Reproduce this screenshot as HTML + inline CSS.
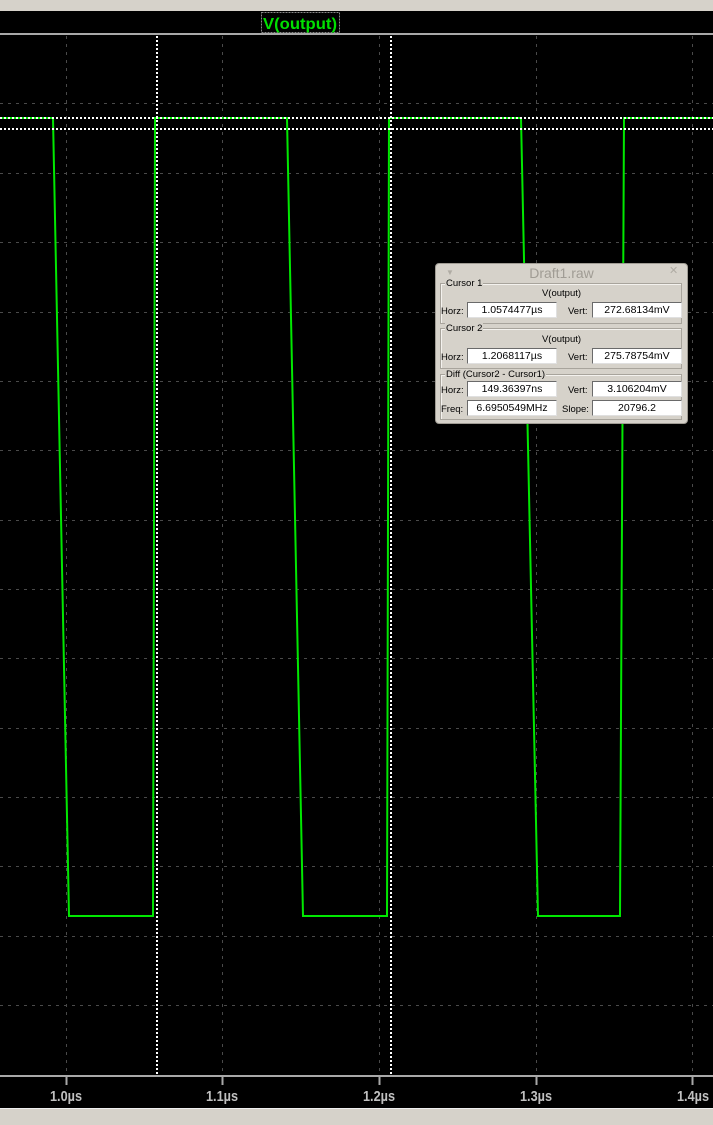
<!DOCTYPE html>
<html><head><meta charset="utf-8"><style>
html,body{margin:0;padding:0;width:713px;height:1124px;overflow:hidden;background:#000;font-family:"Liberation Sans",sans-serif}
.box{position:absolute;left:435px;top:263px;width:251px;height:159px;background:#d6d2ca;border:1px solid #a09c94;border-radius:4px;color:#000}
.a{position:absolute;font-size:9.5px;line-height:11px;white-space:nowrap}
.g{position:absolute;border:1px solid #a8a49c;box-shadow:1px 1px 0 #f4f2ee inset}
.lg{position:absolute;background:#d6d2ca;padding:0 1px;font-size:9.5px;line-height:11px}
.f{position:absolute;background:#fff;border:1px solid #6a6a6a;border-right-color:#e0e0e0;border-bottom-color:#e0e0e0;height:14px;line-height:14px;text-align:center;font-size:10.5px;width:88px}
</style></head><body>
<div style="position:absolute;left:0;top:0;width:713px;height:11px;background:#d6d2ca"></div>
<div style="position:absolute;left:0;top:1108px;width:713px;height:16px;background:#d6d2ca;border-top:1px solid #eee"></div>
<svg width="713" height="1124" style="position:absolute;left:0;top:0">
<line x1="0" y1="34" x2="713" y2="34" stroke="#a8a8a8" stroke-width="2"/>
<rect x="261.5" y="12.5" width="78" height="20" fill="none" stroke="#888" stroke-dasharray="2,1"/>
<text x="300" y="29" text-anchor="middle" fill="#00e000" font-family="Liberation Sans" font-weight="bold" font-size="16" textLength="74" lengthAdjust="spacingAndGlyphs">V(output)</text>
<g stroke="#4a4a4a" stroke-width="1" stroke-dasharray="3,5">
<line x1="66.5" y1="36" x2="66.5" y2="1075"/><line x1="222.5" y1="36" x2="222.5" y2="1075"/><line x1="379.5" y1="36" x2="379.5" y2="1075"/><line x1="536.5" y1="36" x2="536.5" y2="1075"/><line x1="692.5" y1="36" x2="692.5" y2="1075"/>
<line x1="0" y1="103.5" x2="713" y2="103.5"/><line x1="0" y1="173.5" x2="713" y2="173.5"/><line x1="0" y1="242.5" x2="713" y2="242.5"/><line x1="0" y1="312.5" x2="713" y2="312.5"/><line x1="0" y1="381.5" x2="713" y2="381.5"/><line x1="0" y1="450.5" x2="713" y2="450.5"/><line x1="0" y1="520.5" x2="713" y2="520.5"/><line x1="0" y1="589.5" x2="713" y2="589.5"/><line x1="0" y1="658.5" x2="713" y2="658.5"/><line x1="0" y1="728.5" x2="713" y2="728.5"/><line x1="0" y1="797.5" x2="713" y2="797.5"/><line x1="0" y1="866.5" x2="713" y2="866.5"/><line x1="0" y1="936.5" x2="713" y2="936.5"/><line x1="0" y1="1005.5" x2="713" y2="1005.5"/>
</g>
<polyline fill="none" stroke="#00e800" stroke-width="2" points="0,118 53,118 69,916 153,916 155,118 287,118 303,916 387,916 389,118 521,118 538,916 620,916 624,118 713,118"/>
<g stroke="#fff" stroke-width="2" stroke-dasharray="2,2">
<line x1="0" y1="118" x2="713" y2="118"/><line x1="0" y1="129" x2="713" y2="129"/>
<line x1="157" y1="36" x2="157" y2="1075"/><line x1="391" y1="36" x2="391" y2="1075"/>
</g>
<line x1="0" y1="1076" x2="713" y2="1076" stroke="#a8a8a8" stroke-width="2"/>
<g stroke="#a8a8a8" stroke-width="2"><line x1="66.5" y1="1076" x2="66.5" y2="1085"/><line x1="222.5" y1="1076" x2="222.5" y2="1085"/><line x1="379.5" y1="1076" x2="379.5" y2="1085"/><line x1="536.5" y1="1076" x2="536.5" y2="1085"/><line x1="692.5" y1="1076" x2="692.5" y2="1085"/></g>
<g fill="#c0c0c0" font-family="Liberation Sans" font-weight="bold" font-size="15" text-anchor="middle">
<text x="66" y="1101" textLength="32" lengthAdjust="spacingAndGlyphs">1.0µs</text><text x="222" y="1101" textLength="32" lengthAdjust="spacingAndGlyphs">1.1µs</text><text x="379" y="1101" textLength="32" lengthAdjust="spacingAndGlyphs">1.2µs</text><text x="536" y="1101" textLength="32" lengthAdjust="spacingAndGlyphs">1.3µs</text><text x="693" y="1101" textLength="32" lengthAdjust="spacingAndGlyphs">1.4µs</text>
</g>
</svg>
<div class="box">
<div class="a" style="left:10px;top:3px;color:#b0aca4;font-size:8px">▼</div>
<div class="a" style="left:0;width:251px;text-align:center;top:1px;font-size:14px;line-height:16px;color:#a09c94">Draft1.raw</div>
<div class="a" style="left:233px;top:2px;color:#b0aca4;font-size:11px">✕</div>

<div class="g" style="left:4px;top:19px;width:240px;height:39px"></div>
<div class="lg" style="left:9px;top:14px">Cursor 1</div>
<div class="a" style="left:0;width:251px;text-align:center;top:24px">V(output)</div>
<div class="a" style="left:5px;top:42px">Horz:</div><div class="f" style="left:31px;top:38px">1.0574477µs</div>
<div class="a" style="left:132px;top:42px">Vert:</div><div class="f" style="left:156px;top:38px">272.68134mV</div>

<div class="g" style="left:4px;top:64px;width:240px;height:39px"></div>
<div class="lg" style="left:9px;top:59px">Cursor 2</div>
<div class="a" style="left:0;width:251px;text-align:center;top:70px">V(output)</div>
<div class="a" style="left:5px;top:88px">Horz:</div><div class="f" style="left:31px;top:84px">1.2068117µs</div>
<div class="a" style="left:132px;top:88px">Vert:</div><div class="f" style="left:156px;top:84px">275.78754mV</div>

<div class="g" style="left:4px;top:110px;width:240px;height:44px"></div>
<div class="lg" style="left:9px;top:105px">Diff (Cursor2 - Cursor1)</div>
<div class="a" style="left:5px;top:121px">Horz:</div><div class="f" style="left:31px;top:117px">149.36397ns</div>
<div class="a" style="left:132px;top:121px">Vert:</div><div class="f" style="left:156px;top:117px">3.106204mV</div>
<div class="a" style="left:5px;top:140px">Freq:</div><div class="f" style="left:31px;top:136px">6.6950549MHz</div>
<div class="a" style="left:126px;top:140px">Slope:</div><div class="f" style="left:156px;top:136px">20796.2</div>
</div>
</body></html>
